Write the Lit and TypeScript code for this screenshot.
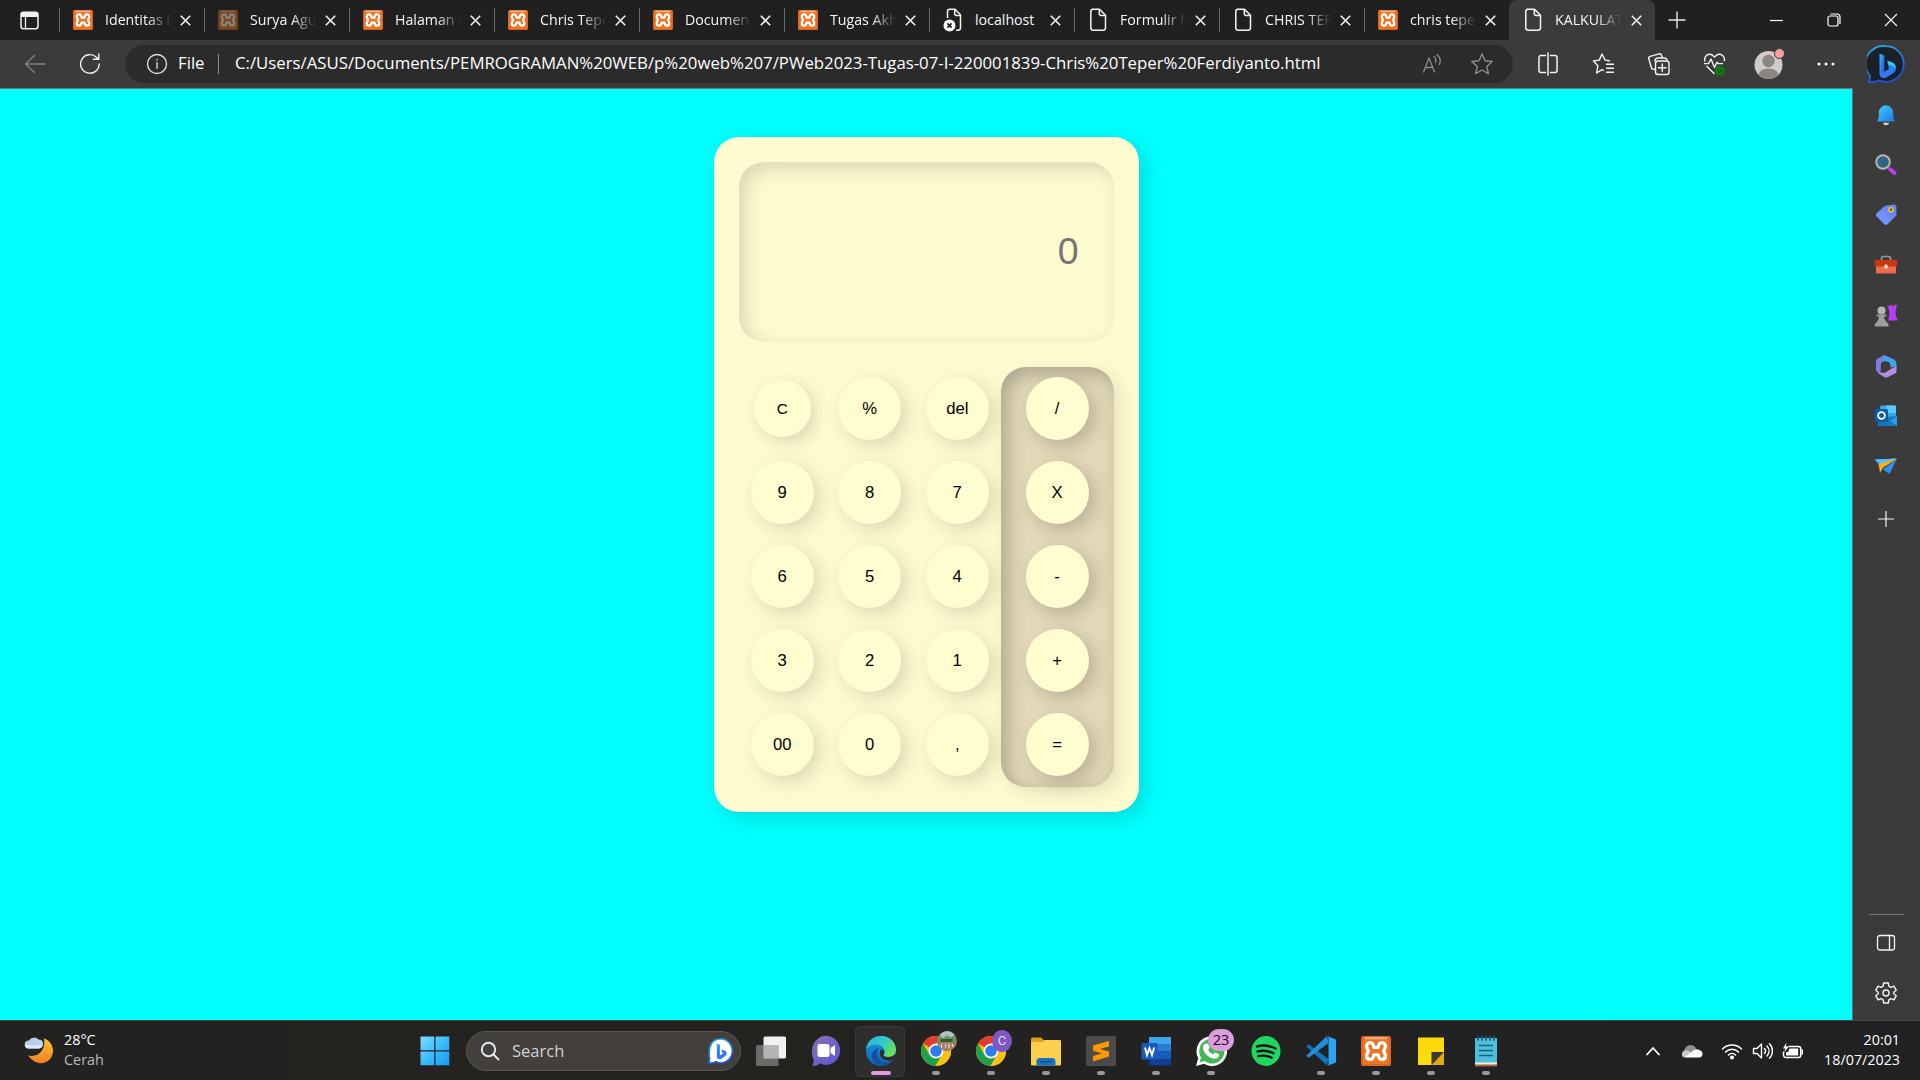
import { LitElement, html, svg, css, TemplateResult } from "lit";
import { customElement, property, state } from "lit/decorators.js";

type Icon = TemplateResult;

const icon = (w: number, h: number, box: string, body: unknown): Icon =>
  html`<svg width=${w} height=${h} viewBox=${box} fill="none" style="display:block">${body}</svg>`;

const line = (w: number, h: number, body: unknown, color = "#fff", sw = 1.3): Icon =>
  html`<svg width=${w} height=${h} viewBox="0 0 ${w} ${h}" fill="none" stroke=${color} stroke-width=${sw}
    stroke-linecap="round" stroke-linejoin="round" style="display:block">${body}</svg>`;

const xampp = (size: number, dim = false) => html`<svg width=${size} height=${size} viewBox="0 0 30 30" fill="none"
  style="display:block" opacity=${dim ? 0.45 : 1}>
  <rect width="30" height="30" rx="2.5" fill="#ee7426"/>
  <rect x="1" y="1" width="28" height="28" rx="2" stroke="#d9611c" stroke-width="1.4"/>
  <path d="M3 .9h24l-1.6 2.4H4.6z" fill="#f4ad80"/>
  <path d="M15 11.400H12.800C12.500 8 11 6.600 9 6.600C6.800 6.600 5.600 8.300 5.600 10.300C5.600 12.600 7.300 13.300 7.300 15C7.300 16.700 5.600 17.400 5.600 19.700C5.600 21.700 6.800 23.400 9 23.400C11 23.400 12.500 22 12.800 18.800H17.200C17.500 22 19 23.400 21 23.400C23.200 23.400 24.400 21.700 24.400 19.700C24.400 17.400 22.700 16.700 22.700 15C22.700 13.300 24.400 12.600 24.400 10.300C24.400 8.300 23.200 6.600 21 6.600C19 6.600 17.500 8 17.200 11.400Z"
    stroke="#fff" stroke-width="3.3" stroke-linejoin="round"/>
</svg>`;

const page = line(20, 24, svg`<path d="M4 1.200h7.500l6 6v12.600a2.400 2.400 0 0 1-2.400 2.400H5.200a2.400 2.400 0 0 1-2.400-2.400V3.600A2.400 2.400 0 0 1 5.200 1.200zM11.300 1.400v4a2 2 0 0 0 2 2h4"/>`, "#f4f4f4", 1.5);
const brokenPage = html`<svg width="20" height="26" viewBox="0 0 20 26" fill="none" style="display:block">
  <path d="M4.500 11V4.600A2.400 2.400 0 0 1 6.900 2.200h5l5.600 5.600v13a2.400 2.400 0 0 1-2.400 2.400H13M11.700 2.400v4a2 2 0 0 0 2 2h3.600" stroke="#f4f4f4" stroke-width="1.500"/>
  <circle cx="6.500" cy="18.500" r="6" fill="#fff"/><path d="M4.400 16.400l4.200 4.200m0-4.200l-4.200 4.200" stroke="#202020" stroke-width="1.700"/></svg>`;

const bingMark = (id: string) => svg`
  <defs><linearGradient id=${id} x1="0" y1="0" x2="1" y2="1"><stop offset="0" stop-color="#38b6f5"/><stop offset="1" stop-color="#2250e8"/></linearGradient>
  <linearGradient id="${id}r" x1="0" y1="0" x2=".4" y2="1"><stop offset="0" stop-color="#29b5e0"/><stop offset="1" stop-color="#1d4fd8"/></linearGradient></defs>`;

const bing = icon(38, 38, "0 0 38 38", svg`${bingMark("bg1")}
  <path d="M19 1.200a17.800 17.800 0 1 1-7 34.200c-3 1.400-6.500 1.900-10 1.400 1-2.300 1.300-4 1.100-6A17.800 17.800 0 0 1 19 1.200z" fill="#1b1f28" stroke="url(#bg1r)" stroke-width="1.800"/>
  <path d="M12.500 8.500l4.800 2v17.500l-4.800 1.600z" fill="url(#bg1)"/>
  <path d="M12.500 29.400l4.800-3 4.700-2.500-1.700-6.500 6.200 2.200c3.500 1.400 3.200 6.500 0 8.500l-7.300 4.300c-3.500 1.500-6.500-.5-6.700-3z" fill="#2f7df2"/>
  <path d="M20 15.500l5.500 2c2.600 1.200 3.500 3.400 3 6-.8-1.600-2-2.400-4-3l-2.600-.8z" fill="#38d0f0"/>`);

const bingSmall = icon(26, 28, "0 0 26 28", svg`${bingMark("bg2")}
  <path d="M13.500 2a11.500 12 0 1 1-4.600 22.800c-2 1.200-4.400 1.500-7 1.200.7-2 .8-3.700.5-5.500C1 8 6 2 13.500 2z" fill="#fff" stroke="url(#bg2r)" stroke-width="1.600"/>
  <path d="M9.800 6.500l3 1.200v11l-3 1.800z" fill="url(#bg2)"/><path d="M9.800 20.300l6-3.600-1.700-4.300 4 1.400c2.200 1 2 4.200 0 5.500l-4.200 2.600c-2 .8-3.900-.2-4.100-1.600z" fill="#2f7df2"/>`);

const close = (s = 11, sw = 1.6) => icon(s, s, "0 0 11 11", svg`<path d="M.8.800l9.400 9.400M10.200.800L.800 10.200" stroke="#f2f2f2" stroke-width=${sw}/>`);

const chrome = html`<svg width="32" height="32" viewBox="0 0 32 32" style="display:block">
  <circle cx="16" cy="16" r="15" fill="#fbc116"/>
  <path d="M16 16L3 8.500A15 15 0 0 1 29 8.500H16z" fill="#e33b2e"/>
  <path d="M3 8.500A15 15 0 0 0 15.500 31l7-12L16 16 9.500 19.700z" fill="#1fa04b"/>
  <path d="M29 8.500H16l6.500 10.700L15.500 31A15 15 0 0 0 29 8.500z" fill="#fbc116"/>
  <circle cx="16" cy="16" r="7.400" fill="#fff"/><circle cx="16" cy="16" r="5.800" fill="#2f7cec"/></svg>`;

const tabs: { t: string; k: "x" | "d" | "p" | "b" }[] = [
  { t: "Identitas D", k: "x" }, { t: "Surya Agu", k: "d" }, { t: "Halaman U", k: "x" },
  { t: "Chris Tepe", k: "x" }, { t: "Documen", k: "x" }, { t: "Tugas Akh", k: "x" },
  { t: "localhost", k: "b" }, { t: "Formulir N", k: "p" }, { t: "CHRIS TEF", k: "p" },
  { t: "chris tepe", k: "x" }, { t: "KALKULAT", k: "p" },
];

@customElement("browser-tab")
class BrowserTab extends LitElement {
  @property() label = "";
  @property() kind = "x";
  static styles = css`
    :host { display: flex; align-items: center; width: 145px; height: 40px; box-sizing: border-box;
      padding: 0 17px 0 14px; position: relative; border-radius: 8px 8px 0 0; flex: none; }
    :host([sep])::before { content: ""; position: absolute; left: 0; top: 8px; width: 1px; height: 24px; background: #6c6c6c; }
    :host([active]) { background: #3b3b3b; width: 146px; }
    .ic { width: 20px; display: flex; justify-content: center; flex: none; }
    .t { font: 14.2px "Open Sans", "Noto Sans", sans-serif; color: #f6f6f6; margin-left: 12px; width: 67px; flex: none;
      white-space: nowrap; line-height: 22px;
      -webkit-mask-image: linear-gradient(90deg, #000 62%, transparent 99%); mask-image: linear-gradient(90deg, #000 62%, transparent 99%); }
    .full { -webkit-mask-image: none; mask-image: none; }
    .c { margin: 1px -4px 0 auto; }
  `;
  render() {
    const k = this.kind;
    return html`<span class="ic">${k === "x" ? xampp(20) : k === "d" ? xampp(20, true) : k === "b" ? brokenPage : page}</span>
      <span class="t ${k === "b" ? "full" : ""}">${this.label}</span><span class="c">${close()}</span>`;
  }
}

@customElement("calc-pad")
class CalcPad extends LitElement {
  @state() value = "";
  static styles = css`
    :host { display: block; box-sizing: border-box; width: 425px; height: 675px; padding: 25px; border-radius: 25px;
      background: #fffbd0; box-shadow: 6px 6px 19px rgba(0, 0, 0, .15); font-family: "Liberation Sans", Arial, sans-serif; }
    input { display: block; box-sizing: border-box; width: 375px; height: 180px; border: 0; outline: 0; border-radius: 25px;
      padding: 0 35px 1px 0; background: #fffbd0; box-shadow: inset 6px 6px 19px rgba(0, 0, 0, .15);
      text-align: right; font: 37.5px "Liberation Sans", Arial, sans-serif; color: #757575; }
    input::placeholder { color: #757575; opacity: 1; }
    .pad { display: grid; grid-template-columns: 262px 113px; margin-top: 25px; height: 420px; }
    .nums { display: grid; grid-template-columns: repeat(3, 87.5px); grid-template-rows: repeat(5, 84px); place-items: center; }
    .ops { display: grid; grid-template-rows: repeat(5, 84px); place-items: center; border-radius: 25px; background: #e4dab9;
      box-shadow: inset 6px 6px 19px rgba(0, 0, 0, .25), 6px 6px 19px rgba(0, 0, 0, .11); }
    button { width: 63px; height: 63px; margin-top: -1px; border: 0; padding: 0; border-radius: 50%; background: #fffcd0; color: #000;
      font: 16.67px "Liberation Sans", Arial, sans-serif; box-shadow: 6px 6px 19px rgba(0, 0, 0, .2); }
    .nums button { box-shadow: 6px 6px 19px rgba(0, 0, 0, .15); }
    .nums button.pressed { width: 57px; height: 57px; font-size: 15.2px; padding-bottom: 1px; box-shadow: 5px 5px 17px rgba(0, 0, 0, .15); }
  `;
  private press(k: string) {
    if (k === "C") this.value = "";
    else if (k === "del") this.value = this.value.slice(0, -1);
    else this.value += k;
  }
  private key(k: string) {
    return html`<button class=${k === "C" ? "pressed" : ""} @click=${() => this.press(k)}>${k}</button>`;
  }
  render() {
    return html`<input placeholder="0" readonly .value=${this.value}>
      <div class="pad">
        <div class="nums">${["C", "%", "del", "9", "8", "7", "6", "5", "4", "3", "2", "1", "00", "0", ","].map((k) => this.key(k))}</div>
        <div class="ops">${["/", "X", "-", "+", "="].map((k) => this.key(k))}</div>
      </div>`;
  }
}

const star = "M0-10.500l3 6.700 7.200.8-5.400 4.900 1.500 7.200L0 5.500l-6.300 3.600 1.500-7.200-5.400-4.900 7.200-.8z";

const toolIcons: Icon[] = [
  line(22, 24, svg`<path d="M8.500 3.500H4a2 2 0 0 0-2 2v13a2 2 0 0 0 2 2h4.500M13.500 3.500H18a2 2 0 0 1 2 2v13a2 2 0 0 1-2 2h-4.500M11 1v22"/>`, "#f4f4f4", 1.5),
  line(24, 24, svg`<path d="M17.500 8.800l-4.300-.7L10 2 7.300 8.100 1.500 9l4.400 4.700L4.600 21 10 17.600l1.500.9M14.500 12.200h7M14.500 16.200h7M14.500 20.200h7"/>`, "#f4f4f4", 1.4),
  line(24, 24, svg`<path d="M8.500 17.500l-2-.1c-1 0-1.800-.6-2.100-1.600L1.800 6.900C1.500 5.800 2 4.700 3.200 4.300L12 1.800c1.100-.3 2.200.3 2.500 1.400l.7 2.300M8 9a3 3 0 0 1 3-3h6.600a3 3 0 0 1 2.600 2"/><rect x="8.500" y="9" width="13.500" height="13.500" rx="2.500"/><path d="M15.300 12v7.500M11.500 15.800H19"/>`, "#f4f4f4", 1.4),
  html`<svg width="24" height="26" viewBox="0 0 24 26" fill="none" style="display:block" stroke="#f4f4f4" stroke-width="1.400" stroke-linejoin="round">
    <path d="M2 10.500C.5 5 5.500 1.500 9.500 4.200L11.500 6l2-1.800c4-2.700 8.800.8 7.800 6M3.500 15l8 8M1 12.600h4.500L8 8l3.500 8.500 2.500-5.300 1.300 1.400H20"/><circle cx="17" cy="20" r="5" fill="#107c10" stroke="none"/><path d="M14.800 20l1.600 1.600 2.800-3" stroke="#0b4f0d"/></svg>`,
  icon(34, 34, "0 0 34 34", svg`<circle cx="15.500" cy="18" r="14" fill="#cfcbc8"/><circle cx="15.500" cy="14" r="6.200" fill="#8b8683"/><path d="M5.500 27.700c1.500-8.200 18.500-8.200 20 0a14 14 0 0 1-20 0z" fill="#8b8683"/><circle cx="26.500" cy="6.500" r="5" fill="#f4a19b" stroke="#3b3b3b" stroke-width="1"/>`),
  icon(18, 4, "0 0 18 4", svg`<circle cx="2" cy="2" r="1.500" fill="#fff"/><circle cx="9" cy="2" r="1.500" fill="#fff"/><circle cx="16" cy="2" r="1.500" fill="#fff"/>`),
];

const side: Icon[] = [
  icon(24, 24, "0 0 24 24", svg`<defs><linearGradient id="bell" x1="0" y1="0" x2="1" y2="1"><stop stop-color="#3fd0f5"/><stop offset="1" stop-color="#2176e8"/></linearGradient></defs><path d="M3.500 18.500c0-2 1.300-2.500 1.300-5V9.500a7.200 7.200 0 0 1 14.400 0v4c0 2.500 1.500 3 1.500 5z" fill="url(#bell)"/><path d="M9 19.800h6c0 3.200-6 3.200-6 0z" fill="#d8d8d8"/>`),
  icon(24, 24, "0 0 24 24", svg`<path d="M15 15l2 2" stroke="#b5b5b5" stroke-width="2"/><path d="M16.500 16.500l4 3.500" stroke="#c13cf0" stroke-width="4" stroke-linecap="round"/><circle cx="9" cy="9" r="6.800" fill="#2d6685" stroke="#b5b5b5" stroke-width="2"/>`),
  icon(24, 24, "0 0 24 24", svg`<defs><linearGradient id="tag" x1="1" y1="0" x2="0" y2="1"><stop stop-color="#5f7df4"/><stop offset="1" stop-color="#7c9cff"/></linearGradient></defs><path d="M12.500 2.500l7.500-1c1.500 0 2.500 1 2.500 2.500v7c0 1-.3 1.500-1 2.200l-8 8c-1 1-2.200 1-3.200 0l-7.600-7.700c-1-1-1-2.200 0-3.200l7.300-6.900z" fill="url(#tag)"/><circle cx="17" cy="6.700" r="2" stroke="#e8c21b" stroke-width="1.700" fill="#34405c"/>`),
  icon(24, 22, "0 0 24 22", svg`<path d="M7.500 7V4.500C7.500 3 8.500 2.500 9.500 2.500h5c1 0 2 .5 2 2V7" stroke="#9b9b9b" stroke-width="1.700"/><rect x="2" y="11" width="20" height="8.500" rx="1.500" fill="#f06a4a"/><rect x=".8" y="6" width="22.400" height="6.500" rx="1.500" fill="#c8380f"/><rect x="10.300" y="10.500" width="3.500" height="4.200" rx="1.400" fill="#d8d8d8"/>`),
  icon(24, 25, "0 0 24 25", svg`<path d="M13 2l2 1.200L17 1.500l2 1.700 2.300-1.700 1.700 1-1.300 5v4.700l2 5.300h-9.500l1-5V7.500z" fill="#b43df0"/><circle cx="7.500" cy="7.500" r="4" fill="#b4b4b4"/><path d="M2.700 11.500h9.600v2H10c0 3 2 5 4.500 7.500v2.500H.8V21c2.200-2 4.200-4.500 4.200-7.500H2.700z" fill="#9d9d9d"/>`),
  icon(24, 24, "0 0 24 24", svg`<path d="M10 1L2 5.800v11l4.500 3 .5-11L17 4z" fill="#7e7be0"/><path d="M9.500 1.300L19 5c2.500 1 3.500 2.500 3.500 5.500v2l-6.500 1-1-5.500L7 6z" fill="#3aa7e8"/><path d="M22.500 12v5c0 1.200-.5 2-1.500 2.500l-7.500 3.700c-1 .4-2 .4-3 0L3 18.500l8 .3 5-3.300z" fill="#b48de0"/><path d="M12 7.500l4.500 2.500v4.500L12 17l-4.200-2.500V10z" fill="#3b3b3b"/>`),
  icon(24, 24, "0 0 24 24", svg`<rect x="6" y="1.500" width="16" height="20.500" rx="1.500" fill="#37a6e8"/><path d="M12 1.500h8.500c1 0 1.500.5 1.500 1.500v6H12z" fill="#55cdf8"/><path d="M4 22V14l18-2v8.500c0 1-.5 1.500-1.500 1.500z" fill="#1876bd"/><path d="M16 17l7-5v10z" fill="#2b9de4"/><rect x="1" y="5" width="13" height="13" rx="1.500" fill="#0b5cae"/><circle cx="7.500" cy="11.500" r="3.400" stroke="#fff" stroke-width="1.800"/>`),
  icon(24, 24, "0 0 24 24", svg`<path d="M.5 5.500L23 4.500 8 14z" fill="#3fa8f5"/><path d="M23 4.500L15.500 20 9 15.500z" fill="#348bf0"/><path d="M1 5.500L23 4.500 7 11z" fill="#57bdfa"/><path d="M4.500 10L23 4.500l-14 9.200-3 5z" fill="#f5b01b"/>`),
];

const task: { i: Icon; run?: boolean; badge?: Icon; active?: boolean }[] = [
  { i: icon(32, 32, "0 0 32 32", svg`<rect x="8.500" y="1.500" width="22.500" height="22" rx="1.500" fill="#f1f1f1"/><rect x="1" y="10" width="22.500" height="21" rx="1.500" fill="#777" fill-opacity=".85"/><path d="M8.500 10h15v13.500h-15z" fill="#b5b5b5"/>`) },
  { i: icon(30, 32, "0 0 30 32", svg`<defs><linearGradient id="ch" x1="0" y1="0" x2="1" y2="1"><stop stop-color="#8d70b8"/><stop offset="1" stop-color="#5656d4"/></linearGradient></defs><path d="M15.500.8A14 14.600 0 1 1 9 28.500c-2.500 2-5 2.500-8 2.300 1.500-2 2-4 1.500-6.300C-2 14 3.500.8 15.500.8z" fill="url(#ch)"/><rect x="6.500" y="9" width="12" height="13" rx="2" fill="#fff"/><path d="M19.500 13l4.500-3v11l-4.500-3z" fill="#fff"/>`) },
  { active: true, run: true, i: icon(32, 32, "0 0 32 32", svg`<defs><linearGradient id="e1" x1="0" y1="0" x2="1" y2=".5"><stop stop-color="#2cb3e8"/><stop offset=".6" stop-color="#35c9c0"/><stop offset="1" stop-color="#66e35a"/></linearGradient><linearGradient id="e2" x1="0" y1="0" x2="0" y2="1"><stop stop-color="#1f9ae0"/><stop offset="1" stop-color="#0c62b8"/></linearGradient></defs>
    <circle cx="16" cy="16" r="15" fill="url(#e2)"/><path d="M1.200 13.500C2.500 5.500 9 1 16.500 1 25 1 31 7.500 31 14.500c0 5-4 7.500-8 7.500-3 0-5-1-4.500-2 2-2.500 1.500-7-3-9.500-5-2.500-11-.5-14.300 3z" fill="url(#e1)"/><path d="M12 16c-1.500 9 7 14.500 16 9-3.500 6-15 8-20 .5-3-5.500-.5-11 5.500-12.500z" fill="#1452a0"/><path d="M18.500 20c-.5 1 1.500 2 4.500 2 3 0 5-.8 7-2.500l1 2-3 3.500c-6 2-11.500-.5-13-5 0-3 0-5 1.500-6 3 1 3.500 4 2 6z" fill="#2e2d2b"/>`) },
  { run: true, i: chrome, badge: html`<svg width="20" height="22" viewBox="0 0 20 22" style="display:block"><circle cx="10" cy="11" r="10" fill="#6e8f5e"/><path d="M3 4.500c4-4.500 11-4.500 14.500 0l-3 3-5-2-4 3z" fill="#a9c2c8"/><path d="M1 14c4-3 13-3 18 0-2 5-6 7-9.500 7S2.500 18.500 1 14z" fill="#a8806a"/><path d="M4.500 14v4M8.500 14.500v3M12 14v4.500M15.500 14v3" stroke="#e5ddd2" stroke-width="1.100"/><path d="M3.500 10.500h12" stroke="#2c5e2d" stroke-width="3"/></svg>` },
  { run: true, i: chrome, badge: html`<span class="bc">C</span>` },
  { run: true, i: icon(32, 32, "0 0 32 32", svg`<path d="M1 4c0-1 .6-1.600 1.600-1.600h8.500l3.400 3.500H30V12H1z" fill="#dfa015"/><path d="M1 8.500c0-1 .5-1.500 1.500-1.500H12l2.500-2H29.500c1 0 1.500.5 1.500 1.500V29c0 1-.5 1.500-1.500 1.500h-27C1.500 30.500 1 30 1 29z" fill="#fccf4e"/><path d="M6.500 30.500v-4c0-2 1.200-3.500 3-3.500h13c1.800 0 3 1.500 3 3.500v4z" fill="#1273c4"/><path d="M10 26.700h12" stroke="#0b4a87" stroke-width="1.300"/>`) },
  { run: true, i: icon(32, 32, "0 0 32 32", svg`<rect x="1" y="1" width="30" height="30" rx="2" fill="#4b4b4b"/><path d="M8 10.500L24 6v5.500L15 14l9 2.500v5L8 26.500V21l9-2.700-9-2.500z" fill="#ff9800"/>`) },
  { run: true, i: icon(32, 32, "0 0 32 32", svg`<path d="M9 2h22v7H9z" fill="#41a5ee"/><path d="M9 9h22v7.500H9z" fill="#2b7cd3"/><path d="M9 16.500h22V24H9z" fill="#185abd"/><path d="M9 24h22v6.500H9z" fill="#103f91"/><rect x="1.500" y="8" width="16" height="16.500" rx="1" fill="#185abd"/><path d="M5 12.500L7 20l2.500-7 2.500 7 2.200-7.500" stroke="#fff" stroke-width="1.900"/>`) },
  { run: true, i: icon(32, 32, "0 0 32 32", svg`<path d="M16 1.200A15 15 0 1 1 9 28.800L1 31l2.200-7.800A15 15 0 0 1 16 1.200z" fill="#fff"/><path d="M16 3.800A12.400 12.400 0 1 1 9.500 26l-4.800 1.300 1.300-4.700A12.400 12.400 0 0 1 16 3.800z" fill="#43b854"/><path d="M11 8.500l2 .2 1.700 4-1.500 2c1 2 2.600 3.600 5 4.600l1.800-2 4 2c.5 3-2 4.500-4 4.500-6 0-12-6.500-12-11 0-2 1-3.800 3-4.300z" fill="#fff"/>`), badge: html`<span class="bn">23</span>` },
  { i: icon(30, 32, "0 0 30 32", svg`<ellipse cx="15" cy="16" rx="14.500" ry="15" fill="#1ed760"/><path d="M6 11.500c6-1.800 12.500-1 18.500 2M6.500 16.500c5.500-1.500 11-.8 16 1.800M7.500 21.200c4.500-1.200 9-.6 13.200 1.600" stroke="#111" stroke-width="2.400" stroke-linecap="round"/>`) },
  { run: true, i: icon(32, 32, "0 0 32 32", svg`<path d="M1.200 11.200l2.500-2 19.800 14.800-1.500 6.500z" fill="#1272b8"/><path d="M1.200 20.800l2.500 2L23.500 8 22 1z" fill="#2490dd"/><path d="M22 1l9 3.500v23L22 31c1-.5 1.500-1.300 1.500-2.500v-25C23.500 2.500 23 1.500 22 1z" fill="#2aa5f2"/>`) },
  { run: true, i: xampp(30) },
  { run: true, i: icon(28, 30, "0 0 28 30", svg`<path d="M1 1.500h26V17L15 29H1z" fill="#fdda0b"/><path d="M27 16v13H15z" fill="#e8a90e"/><path d="M14.500 16H27L14.500 29z" fill="#393939"/>`) },
  { run: true, i: icon(24, 32, "0 0 24 32", svg`<path d="M1 3h22v25H1z" fill="#51bfd9"/><path d="M1 28h22v3.500H1z" fill="#a8622e"/><path d="M1 27.500h22v2H1z" fill="#efefef"/><path d="M5 10.500h14M5 15.500h14M5 20.500h14" stroke="#0f6486" stroke-width="1.600"/><path d="M4 1v4M8 1v4M12 1v4M16 1v4M20 1v4" stroke="#145c78" stroke-width="1.700" stroke-linecap="round"/>`) },
];

@customElement("app-root")
class AppRoot extends LitElement {
  static styles = css`
    :host { display: flex; flex-direction: column; width: 1920px; height: 1080px; overflow: hidden; background: #3b3b3b;
      font-family: "Open Sans", "Noto Sans", sans-serif; color: #fff; }
    .strip { height: 40px; background: #202020; display: flex; align-items: center; flex: none; }
    .ws { width: 59px; display: flex; justify-content: center; flex: none; }
    .plus { width: 18px; margin-left: 13px; }
    .win { margin-left: auto; display: flex; align-items: center; }
    .win span { width: 57.5px; display: flex; justify-content: center; }
    .bar { height: 48px; background: #3b3b3b; display: flex; align-items: center; flex: none; }
    .nav { width: 125px; display: flex; align-items: center; flex: none; gap: 33px; padding-left: 24px; box-sizing: border-box; }
    .addr { width: 1388px; height: 38px; border-radius: 19px; background: #2b2b2b; display: flex; align-items: center; flex: none;
      box-sizing: border-box; padding: 0 20px 0 21px; font-size: 16.77px; line-height: 22px; white-space: nowrap; }
    .addr .f, .addr .url { padding-bottom: 2px; }
    .addr .f { margin-left: 10px; width: 29px; }
    .addr .s { width: 1px; height: 20px; background: #8a8a8a; margin: 0 16px 0 11px; }
    .ra { margin-left: auto; display: flex; gap: 29px; align-items: center; }
    .tools { display: flex; flex: none; padding-left: 7.500px; }
    .tools span { width: 55.500px; height: 46px; display: flex; justify-content: center; align-items: center; }
    .tools .bi { width: 64px; height: 46px; }
    .main { display: flex; height: 932px; flex: none; }
    .view { width: 1852px; box-sizing: border-box; background: #0ff; border-top: 1px solid #767676; display: flex; justify-content: center;
      padding-top: 48px; flex: none; }
    .sb { width: 68px; box-sizing: border-box; padding-right: 1px; border-left: 1px solid #6a6a6a; background: #3b3b3b; display: flex; flex-direction: column; align-items: center; }
    .sb .it { height: 50.100px; display: flex; align-items: center; }
    .sb .list { padding-top: 2px; }
    .sb .add { margin-top: 20px; }
    .sb .rule { width: 35px; height: 1px; background: #767676; margin-top: auto; }
    .sb .pn { margin-top: 19px; } .sb .gr { margin: 29px 0 15px; }
    .tb { height: 60px; box-sizing: border-box; border-top: 1px solid #454441; background: linear-gradient(90deg, #222221, #25231f 30%, #232221 60%, #202123);
      display: flex; align-items: center; flex: none; }
    .we { display: flex; align-items: center; width: 396px; padding-left: 24px; gap: 10px; font-size: 14.4px; line-height: 20px; }
    .we > div { margin-top: -2px; }
    .we .dim { color: #b9b9b9; }
    .search { width: 275px; height: 40px; box-sizing: border-box; border: 1px solid #595755; border-radius: 20px; background: #423f3c; display: flex; align-items: center;
      padding: 0 7px 0 13px; font-size: 16.500px; color: #d2d2d2; margin: 0 2px 0 16px; flex: none; }
    .search .q { margin-left: 12px; } .search .b { margin-left: auto; }
    .slot { width: 55px; height: 60px; display: flex; justify-content: center; align-items: center; position: relative; flex: none; }
    .slot.on::before { content: ""; position: absolute; left: 2px; top: 5px; width: 48px; height: 49px; border: 1px solid #3a3937; border-radius: 5px; background: #2e2d2b; }
    .slot .i { position: relative; }
    .slot .r { position: absolute; left: 23.500px; top: 50px; width: 8px; height: 4px; border-radius: 2px; background: #989898; }
    .slot.on .r { left: 17.500px; width: 20px; background: #dd9ce0; }
    .slot .bd { position: absolute; left: 29px; top: 9px; }
    .bc { display: block; width: 20px; height: 22px; border-radius: 50%; background: #7e57c2; font: 13px/22px Roboto, sans-serif; text-align: center; color: #e6dcf5; }
    .bn { display: block; width: 26px; height: 22px; margin: -1px 0 0 -4px; border-radius: 11px; background: #dd9ce0; color: #111; font-size: 14.500px; line-height: 21px; text-align: center; }
    .tray { margin-left: auto; display: flex; align-items: center; padding-right: 20px; }
    .g21 { width: 20px; } .g18 { width: 18px; } .g9 { width: 9px; }
    .clock { font-size: 14.300px; line-height: 20px; text-align: right; margin: -2px 0 0 17px; width: 79px; white-space: nowrap; }
  `;
  render() {
    return html`
      <div class="strip">
        <span class="ws">${icon(19, 19, "0 0 19 19", svg`<rect x="1" y="1.200" width="17" height="16.500" rx="2.500" stroke="#f2f2f2" stroke-width="1.500"/><path d="M1 3.500c0-1.500 1-2.500 2.500-2.500h12C17 1 18 2 18 3.500V6H1z" fill="#f2f2f2"/><path d="M5.500 6v11.500" stroke="#f2f2f2" stroke-width="1.300"/>`)}</span>
        ${tabs.map((t, n) => html`<browser-tab .label=${t.t} .kind=${t.k} ?sep=${n < 10} ?active=${n === 10}></browser-tab>`)}
        <span class="plus">${line(18, 18, svg`<path d="M9 1v16M1 9h16"/>`, "#e8e8e8", 1.4)}</span>
        <div class="win">
          <span>${icon(13, 13, "0 0 13 13", svg`<path d="M0 6.500h13" stroke="#fff" stroke-width="1.200"/>`)}</span>
          <span>${line(14, 14, svg`<rect x="1" y="3" width="10" height="10" rx="2"/><path d="M4 1h6a3 3 0 0 1 3 3v6.500"/>`, "#fff", 1.2)}</span>
          <span>${close(14, 0.9)}</span>
        </div>
      </div>
      <div class="bar">
        <div class="nav">
          ${line(22, 20, svg`<path d="M10.500 1.500L1.500 10l9 8.500M1.500 10H21"/>`, "#7d7d7d", 1.4)}
          ${line(22, 22, svg`<path d="M20.200 11a9.300 9.300 0 1 1-2.800-6.700l1.800 1.700M19.800 1v5.300h-5.500"/>`, "#f2f2f2", 1.4)}
        </div>
        <div class="addr">
          ${line(22, 22, svg`<circle cx="11" cy="11" r="9.500"/><path d="M11 9.800v5.500M11 6.500v.4"/>`, "#ddd", 1.4)}
          <span class="f">File</span><span class="s"></span>
          <span class="url">C:/Users/ASUS/Documents/PEMROGRAMAN%20WEB/p%20web%207/PWeb2023-Tugas-07-I-220001839-Chris%20Teper%20Ferdiyanto.html</span>
          <span class="ra">
            ${line(20, 20, svg`<path d="M1.500 18L7 4l5.500 14M3.500 13.500h7M12 2.500c1.800 1.500 2.300 3.700 1.500 6M15 .800c3.200 2.600 4 6 2.300 9.600"/>`, "#8d8d8d", 1.3)}
            ${line(22, 22, svg`<path transform="translate(11 11.500)" d=${star}/>`, "#8d8d8d", 1.4)}
          </span>
        </div>
        <div class="tools">${toolIcons.map((i) => html`<span>${i}</span>`)}<span class="bi">${bing}</span></div>
      </div>
      <div class="main">
        <div class="view"><calc-pad></calc-pad></div>
        <div class="sb">
          <div class="list">${side.map((i) => html`<div class="it">${i}</div>`)}</div>
          <div class="add">${line(16, 16, svg`<path d="M8 .5v15M.5 8h15"/>`, "#f2f2f2", 1.2)}</div>
          <div class="rule"></div>
          <div class="pn">${line(20, 18, svg`<rect x="1.500" y="1.500" width="17" height="14.500" rx="2.500"/><path d="M13.500 1.500V16"/>`, "#f4f4f4", 1.3)}</div>
          <div class="gr">${line(24, 24, svg`<circle cx="12" cy="12" r="3"/><path d="M9.700 2h4.600l.6 3.200 2 1.100 3-1.100 2.300 4-2.400 2v1.600l2.400 2-2.300 4-3-1.100-2 1.100-.6 3.200H9.700l-.6-3.200-2-1.100-3 1.100-2.300-4 2.400-2v-1.600l-2.400-2 2.300-4 3 1.100 2-1.100z"/>`, "#f4f4f4", 1.4)}</div>
        </div>
      </div>
      <div class="tb">
        <div class="we">
          ${icon(30, 30, "0 0 30 30", svg`<defs><linearGradient id="mo" x1="0" y1="0" x2="0" y2="1"><stop stop-color="#f5c433"/><stop offset="1" stop-color="#f08020"/></linearGradient></defs><path d="M20 2.500c7 2 10.500 9.500 8.500 16-2.500 9-15 13.500-24.500 1 10 2.500 18-5 16-17z" fill="url(#mo)"/><path d="M4.500 12.500a4 4 0 0 1 .5-8 6 6 0 0 1 9.500-1c4 0 5.500 3 4 6-.6 2-2 3-4 3z" fill="#bccbf0"/><path d="M4.500 12.500c-2.500 0-4-2-3.500-4 4 1 14 1 18 0-.5 2.500-2 4-4.500 4z" fill="#dfe7fa"/>`)}
          <div><div>28°C</div><div class="dim">Cerah</div></div>
        </div>
        ${icon(30, 30, "0 0 30 30", svg`<defs><linearGradient id="wn" x1="0" y1="0" x2="30" y2="30" gradientUnits="userSpaceOnUse"><stop stop-color="#7fdcff"/><stop offset=".5" stop-color="#3cbcff"/><stop offset="1" stop-color="#1398f5"/></linearGradient></defs><path d="M.5.500h13.800v13.800H.5zM15.500.500h13.800v13.800H15.500zM.5 15.500h13.800v13.800H.5zM15.500 15.500h13.800v13.800H15.500z" fill="url(#wn)"/>`)}
        <div class="search">
          ${line(20, 20, svg`<circle cx="8.500" cy="8.500" r="6.700"/><path d="M13.500 13.500l5 5"/>`, "#e6e6e6", 2)}
          <span class="q">Search</span><span class="b">${bingSmall}</span>
        </div>
        ${task.map((t) => html`<div class="slot ${t.active ? "on" : ""}"><span class="i">${t.i}</span>
          ${t.badge ? html`<span class="bd">${t.badge}</span>` : ""}${t.run ? html`<i class="r"></i>` : ""}</div>`)}
        <div class="tray">
          ${line(16, 10, svg`<path d="M2 8.500L8 2l6 6.500"/>`, "#fff", 1.8)}
          <span class="g21"></span>
          ${icon(22, 16, "0 0 22 16", svg`<path d="M3 9C3 3 10-.500 14.500 4.500L17 8z" fill="#8f8f8f"/><path d="M1 12C.5 8 4.500 6 8 8l8 4-12 2.500C2 14.500 1 13.500 1 12z" fill="#c8c8c8"/><path d="M4 14.500l8-7c4-2 9.500-.5 9.500 3.500 0 2.300-1.500 3.500-3.500 3.500z" fill="#fff"/>`)}
          <span class="g18"></span>
          ${line(22, 18, svg`<path d="M1.500 7a13.500 13.500 0 0 1 19 0M4.500 10a9 9 0 0 1 13 0M7.500 13a5 5 0 0 1 7 0"/><circle cx="11" cy="15.500" r="1.300" fill="#fff"/>`, "#fff", 1.5)}
          <span class="g9"></span>
          ${line(21, 18, svg`<path d="M1.500 6.500H5L9.500 2v14L5 11.500H1.500zM12.500 6.500c1.300 1.500 1.300 3.500 0 5M15 4c2.700 3 2.700 7 0 10M17.500 1.800c4 4.200 4 10 0 14.400"/>`, "#fff", 1.4)}
          <span class="g9"></span>
          ${icon(22, 18, "0 0 22 18", svg`<path d="M6.500 4.500h9.800a2.500 2.500 0 0 1 2.500 2.500v6a2.500 2.500 0 0 1-2.500 2.500H4A2.500 2.500 0 0 1 1.500 13V9.500" stroke="#fff" stroke-width="1.500"/><path d="M7.500 6.500h8.700v7H4V10l2 .2z" fill="#fff"/><path d="M19.500 7.500h1.500v5h-1.500z" fill="#fff"/><path d="M4.500.5L1 6.500h2.500L2 10.500 7 4.500H4z" fill="#fff"/>`)}
          <div class="clock"><div>20:01</div><div>18/07/2023</div></div>
        </div>
      </div>`;
  }
}
